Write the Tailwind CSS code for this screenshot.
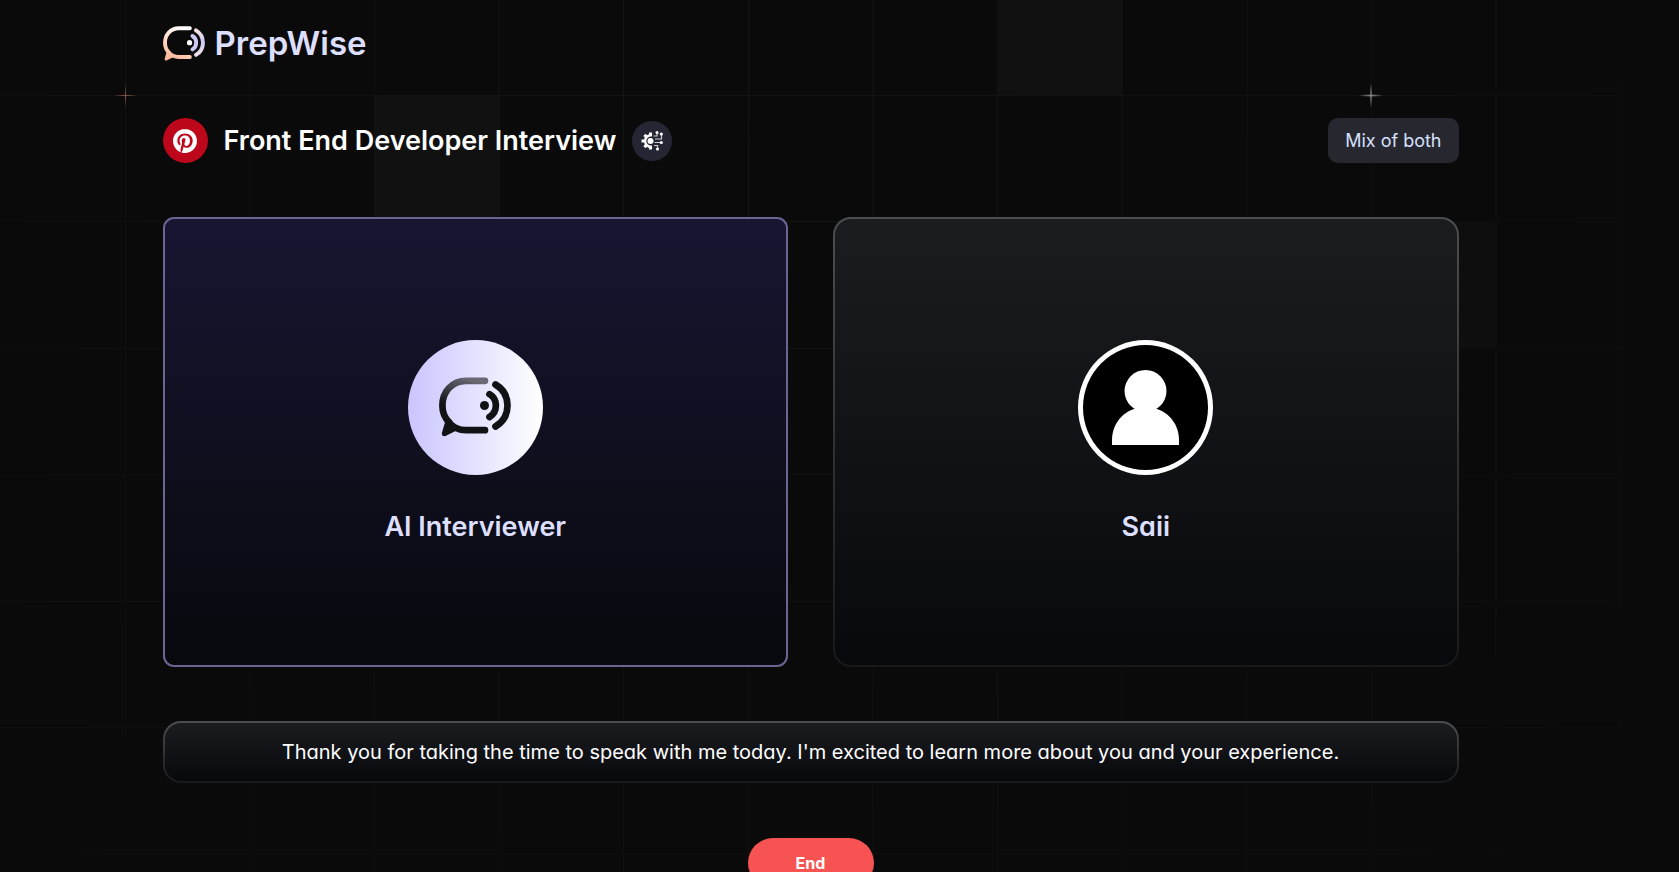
<!DOCTYPE html>
<html lang="en">

<head>
    <meta charset="UTF-8">
    <meta name="viewport" content="width=device-width, initial-scale=1.0">
    <title>PrepWise</title>
    <script src="https://cdn.jsdelivr.net/npm/@tailwindcss/browser@4"></script>
</head>

<body class="relative min-h-screen overflow-x-hidden bg-[#0a0a0a] pr-[58px] font-[Inter,sans-serif] [font-feature-settings:'cv11'] text-white antialiased">

    <!-- background grid -->
    <svg class="absolute inset-0 -z-10 h-full w-full" viewBox="0 0 1679 888" preserveAspectRatio="xMinYMin slice" fill="none" aria-hidden="true">
        <defs>
            <radialGradient id="fade" gradientUnits="userSpaceOnUse" cx="750" cy="200" r="1000">
                <stop offset="0" stop-color="#151515" />
                <stop offset="1" stop-color="#0c0c0c" />
            </radialGradient>
            <radialGradient id="spark">
                <stop offset="0" stop-color="#8a8a8a" />
                <stop offset="1" stop-color="#8a8a8a" stop-opacity="0" />
            </radialGradient>
            <radialGradient id="spark-warm">
                <stop offset="0" stop-color="#8a584e" />
                <stop offset="1" stop-color="#8a584e" stop-opacity="0" />
            </radialGradient>
        </defs>
        <path fill="#111111" d="M997 0h125v96h-125zM374 96h125v126H374z" />
        <path fill="#0e0e0e" d="M1371 222h125v126h-125z" />
        <path stroke="url(#fade)" d="M125.500 0v740M250 0v888M374.500 0v888M499 0v888M623.500 0v888M748.500 0v888M873 0v888M997.500 0v888M1122 0v888M1247 0v888M1371.500 0v888M1496 0v888M1620.500 75v653M0 95.500h1620.500M0 221.500h1620.500M0 348.500h1620.500M0 474.500h1620.500M0 601.500h1620.500M0 727.500h1620.500M80 854h1460" />
        <ellipse cx="125.500" cy="95.500" rx="12" ry="1" fill="url(#spark-warm)" />
        <ellipse cx="125.500" cy="95.500" rx="1" ry="12" fill="url(#spark-warm)" />
        <ellipse cx="1371" cy="95.500" rx="13" ry="1.500" fill="url(#spark)" />
        <ellipse cx="1371" cy="95.500" rx="1.500" ry="13" fill="url(#spark)" />
    </svg>

    <div class="mx-auto flex max-w-[1296px] flex-col pt-[21px]">
        <nav>
            <a href="#" class="flex items-center gap-2.5">
                <svg class="h-[35px] w-[42px]" viewBox="0 0 72 60" fill="none" stroke-width="6.700" stroke-linecap="round" aria-hidden="true">
                    <defs>
                        <linearGradient id="peach" gradientUnits="userSpaceOnUse" x1="34" y1="2" x2="10" y2="58">
                            <stop offset="0" stop-color="#ffffff" />
                            <stop offset="1" stop-color="#ffb592" />
                        </linearGradient>
                        <linearGradient id="lilac" gradientUnits="userSpaceOnUse" x1="56" y1="6" x2="66" y2="50">
                            <stop offset="0" stop-color="#fbe3e0" />
                            <stop offset=".5" stop-color="#cfcaf5" />
                            <stop offset="1" stop-color="#f3dfe4" />
                        </linearGradient>
                    </defs>
                    <path stroke="url(#peach)" d="M46 3.800H27C13 3.800 3.400 15 3.400 28.500c0 7 2.600 13 7.200 17.200M46 53.200H27c-4 0-7-.8-10-2.200" />
                    <path fill="url(#peach)" d="M6.500 43.500 3 55.500c-.8 3 1.500 4.500 4 3.200l11-5.500 5-1.500-12-9z" />
                    <circle cx="45.500" cy="28.500" r="4.500" fill="#ffffff" />
                    <path stroke="#cfcaf5" d="M50.500 17.200c8.500 5 8.500 17.800 0 22.800" />
                    <path stroke="url(#lilac)" d="M56.500 7.500c16 9.500 16 32.500 0 42" />
                </svg>
                <span class="text-[33px] leading-[44px] font-semibold text-[#dddfff]">PrepWise</span>
            </a>
        </nav>

        <div class="mt-[53px] flex items-center justify-between gap-4">
            <div class="flex items-center gap-4">
                <div class="flex size-[45px] items-center justify-center rounded-full bg-[#bd081c]">
                    <svg class="size-6" viewBox="0 0 24 24" fill="#ffffff" role="img" aria-label="Pinterest">
                        <path d="M12.017 0C5.396 0 .029 5.367.029 11.987c0 5.079 3.158 9.417 7.618 11.162-.105-.949-.199-2.403.041-3.439.219-.937 1.406-5.957 1.406-5.957s-.359-.72-.359-1.781c0-1.663.967-2.911 2.168-2.911 1.024 0 1.518.769 1.518 1.688 0 1.029-.653 2.567-.992 3.992-.285 1.193.6 2.165 1.775 2.165 2.128 0 3.768-2.245 3.768-5.487 0-2.861-2.063-4.869-5.008-4.869-3.41 0-5.409 2.562-5.409 5.199 0 1.033.394 2.143.889 2.741.099.12.112.225.085.345-.09.375-.293 1.199-.334 1.363-.053.225-.172.271-.401.165-1.495-.69-2.433-2.878-2.433-4.646 0-3.776 2.748-7.252 7.92-7.252 4.158 0 7.392 2.967 7.392 6.923 0 4.135-2.607 7.462-6.233 7.462-1.214 0-2.354-.629-2.758-1.379l-.749 2.848c-.269 1.045-1.004 2.352-1.498 3.146 1.123.345 2.306.535 3.55.535 6.607 0 11.985-5.365 11.985-11.987C23.97 5.39 18.592.026 11.985.026z" />
                    </svg>
                </div>
                <h1 class="text-[27px] leading-9 font-semibold">Front End Developer Interview</h1>
                <div class="flex size-10 items-center justify-center rounded-full bg-[#242633]">
                    <svg class="size-[22px]" viewBox="0 0 22 22" fill="none" stroke="#ffffff" aria-hidden="true">
                        <path stroke-width="2.400" d="M11 5.300A5.800 5.800 0 1 0 11 16.700" />
                        <path stroke-width="3" d="M9.500 5.500V2.500M5.400 6.900 3.400 4.900M3.500 11H.5M5.400 15.100l-2 2M9.500 16.500v3" />
                        <circle cx="9.500" cy="11" r="3" fill="#ffffff" stroke="none" />
                        <path stroke="#c8c9cf" stroke-width="1.200" d="M12.500 6h3.500V2.500M14 9h6.500V4M13.500 12.500h7M13 15.500h3.500V19" />
                        <g fill="#ffffff" stroke="none">
                            <circle cx="16" cy="2.500" r="1.500" />
                            <circle cx="20.300" cy="4" r="1.600" />
                            <circle cx="20.300" cy="12.500" r="1.600" />
                            <circle cx="16.500" cy="19" r="1.600" />
                        </g>
                    </svg>
                </div>
            </div>
            <p class="rounded-[10px] bg-[#27282f] px-[17px] py-2.5 text-[18px] leading-[25px] text-[#d6e0ff]">Mix of both</p>
        </div>

        <div class="mt-[54px] grid grid-cols-2 gap-[45px]">
            <div class="flex h-[450px] flex-col items-center justify-center gap-[34px] rounded-[11px] border-2 border-[#6b6691] bg-linear-to-b from-[#171532] to-[#08090d]">
                <div class="flex size-[135px] items-center justify-center rounded-full bg-linear-to-r from-[#cac5fe] to-white">
                    <svg class="h-[60px] w-[72px]" viewBox="0 0 72 60" fill="none" stroke-width="6.700" stroke-linecap="round" aria-hidden="true">
                        <defs>
                            <linearGradient id="ink" gradientUnits="userSpaceOnUse" x1="30" y1="2" x2="20" y2="32">
                                <stop offset="0" stop-color="#6a6875" />
                                <stop offset="1" stop-color="#101214" />
                            </linearGradient>
                        </defs>
                        <path stroke="url(#ink)" d="M46 3.800H27C13 3.800 3.400 15 3.400 28.500c0 7 2.600 13 7.200 17.200M46 53.200H27c-4 0-7-.8-10-2.200" />
                        <path fill="#101214" d="M6.500 43.500 3 55.500c-.8 3 1.500 4.500 4 3.200l11-5.500 5-1.500-12-9z" />
                        <circle cx="45.500" cy="28.500" r="4.500" fill="#101214" />
                        <path stroke="#101214" d="M50.500 17.200c8.500 5 8.500 17.800 0 22.800M56.500 7.500c16 9.500 16 32.500 0 42" />
                    </svg>
                </div>
                <h2 class="text-[27px] leading-9 font-semibold text-[#dddfff]">AI Interviewer</h2>
            </div>

            <div class="h-[450px] rounded-[18px] bg-linear-to-b from-[#4b4d4f] to-[#18191a] p-0.5">
                <div class="flex h-full flex-col items-center justify-center gap-[34px] rounded-2xl bg-linear-to-b from-[#1a1c20] to-[#08090d]">
                    <svg class="size-[135px]" viewBox="0 0 135 135" role="img" aria-label="Saii">
                        <circle cx="67.500" cy="67.500" r="67.500" fill="#ffffff" />
                        <circle cx="67.500" cy="67.500" r="62.500" fill="#000000" />
                        <circle cx="67.500" cy="51" r="21" fill="#ffffff" />
                        <path fill="#ffffff" d="M34 105v-5c0-18 14-33 33.500-33S101 82 101 100v5z" />
                    </svg>
                    <h2 class="text-[27px] leading-9 font-semibold text-[#dddfff]">Saii</h2>
                </div>
            </div>
        </div>

        <div class="mt-[54px] rounded-[18px] bg-linear-to-b from-[#4b4d4f] to-[#18191a] p-0.5">
            <div class="rounded-2xl bg-linear-to-b from-[#1a1c20] to-[#08090d] px-5 py-[14px]">
                <p class="text-center text-[20px] leading-[30px]">Thank you for taking the time to speak with me today. I'm excited to learn more about you and your experience.</p>
            </div>
        </div>

        <div class="mt-[55px] flex justify-center">
            <button class="h-[50px] w-[126px] cursor-pointer rounded-full bg-[#f75353] text-[16px] leading-5 font-bold text-white">End</button>
        </div>
    </div>
</body>

</html>
